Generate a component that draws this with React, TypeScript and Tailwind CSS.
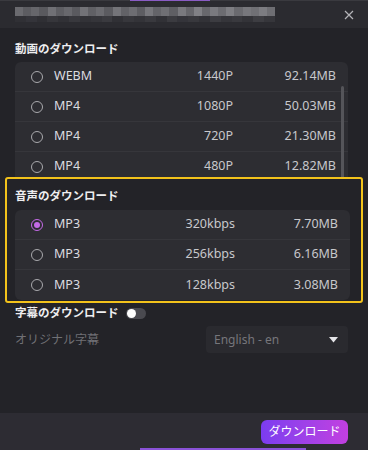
import React, { useState } from 'react';

const font = { fontFamily: '"Noto Sans", "Noto Sans CJK JP", sans-serif' };

const videoRows = [
    { fmt: 'WEBM', q: '1440P', size: '92.14MB' },
    { fmt: 'MP4', q: '1080P', size: '50.03MB' },
    { fmt: 'MP4', q: '720P', size: '21.30MB' },
    { fmt: 'MP4', q: '480P', size: '12.82MB' },
];

const audioRows = [
    { fmt: 'MP3', q: '320kbps', size: '7.70MB' },
    { fmt: 'MP3', q: '256kbps', size: '6.16MB' },
    { fmt: 'MP3', q: '128kbps', size: '3.08MB' },
];

// pixelated, blurred page title
const blurTop = ['#6a6a6f', '#5c5c61', '#66666b', '#59595e', '#707075', '#5e5e63', '#68686d', '#5a5a5f', '#727277', '#606065', '#6b6b70', '#5b5b60', '#747479', '#626267', '#6d6d72', '#5d5d62', '#77777c', '#646469', '#6f6f74', '#5f5f64', '#79797e', '#66666b', '#808085', '#68686d', '#7a7a7f', '#6c6c71', '#7e7e83', '#6a6a6f', '#77777c', '#707075', '#7c7c81', '#6e6e73'];
const blurBottom = ['#303035', '#34343a', '#2f2f34', '#36363b', '#313136', '#38383d', '#323237', '#35353a', '#3a3a3f', '#303035', '#37373c', '#333338', '#39393e', '#313136', '#3b3b40', '#34343a', '#38383d', '#323237', '#3c3c41', '#35353a', '#39393e', '#333338', '#3d3d42', '#36363b'];

const Radio = ({ checked }: { checked?: boolean }) => (
    <span
        className={
            'flex h-[12px] w-[12px] items-center justify-center rounded-full border ' +
            (checked ? 'border-[#c46ae6]' : 'border-[#a9a9ad]')
        }
    >
        {checked && <span className="h-[6px] w-[6px] rounded-full bg-[#c46ae6]" />}
    </span>
);

const Row = ({ fmt, q, size, checked, last }: { fmt: string; q: string; size: string; checked?: boolean; last?: boolean }) => (
    <div className={'flex h-[30px] items-center text-[12.5px] text-[#dcdce0] ' + (last ? '' : 'border-b border-[#36363b]')}>
        <div className="flex w-[39px] justify-end pr-[11px]">
            <Radio checked={checked} />
        </div>
        <span className="flex-1">{fmt}</span>
        <span className="w-[100px] text-right text-[#c8c8cc]">{q}</span>
        <span className="w-[115px] pr-[12px] text-right text-[#c8c8cc]">{size}</span>
    </div>
);

export default function App() {
    const [selected] = useState(0);
    return (
        <div className="relative flex h-[450px] w-[368px] flex-col overflow-hidden bg-[#232328]" style={font}>
            <div className="absolute left-[130px] top-0 h-[1px] w-[80px] bg-[#8a5cc4]" />

            {/* header */}
            <div className="flex h-[28px] items-center justify-between border-t border-[#3a3a3f] bg-[#2b2b30] pl-[15px] pr-[14px]">
                <div className="flex flex-col">
                    <div className="flex h-[9px] w-[260px]">
                        {blurTop.map((c, i) => (
                            <div key={i} className="h-full flex-1" style={{ background: c }} />
                        ))}
                    </div>
                    <div className="flex h-[6px] w-[260px]">
                        {blurBottom.map((c, i) => (
                            <div key={i} className="h-full flex-1" style={{ background: c }} />
                        ))}
                    </div>
                </div>
                <svg width="10" height="10" viewBox="0 0 10 10" className="text-[#b4b4b8]">
                    <path d="M1 1 L9 9 M9 1 L1 9" stroke="currentColor" strokeWidth="1.2" />
                </svg>
            </div>

            {/* body */}
            <div className="flex flex-1 flex-col">
                <div className="px-[15px] pt-[11px] text-[11.5px] font-bold leading-[20px] text-[#eeeef0]">動画のダウンロード</div>
                <div className="relative ml-[15px] mr-[20px] mt-[3px] h-[115px] overflow-hidden">
                    <div className="rounded-[6px] bg-[#2d2d32]">
                        {videoRows.map((r, i) => (
                            <Row key={i} {...r} />
                        ))}
                    </div>
                    <div className="absolute right-[4px] top-[24px] h-[96px] w-[3px] rounded-full bg-[#55555a]" />
                </div>

                <div className="mx-[5px] rounded-[3px] border-2 border-[#f2c21b] pb-[1px] pl-[8px] pr-[11px]">
                    <div className="pt-[7px] text-[11.5px] font-bold leading-[20px] text-[#eeeef0]">音声のダウンロード</div>
                    <div className="mt-[4px] rounded-[6px] bg-[#2d2d32]">
                        {audioRows.map((r, i) => (
                            <Row key={i} {...r} checked={i === selected} last={i === audioRows.length - 1} />
                        ))}
                    </div>
                </div>

                <div className="flex items-center gap-[7px] px-[15px] text-[11.5px] font-bold leading-[20px] text-[#eeeef0]">
                    <span>字幕のダウンロード</span>
                    <span className="flex h-[11px] w-[20px] items-center rounded-full bg-[#4a4a50] px-[1px]">
                        <span className="h-[9px] w-[9px] rounded-full bg-white" />
                    </span>
                </div>

                <div className="mt-[3px] flex items-center justify-between pl-[15px] pr-[20px]">
                    <span className="text-[12px] text-[#707075]">オリジナル字幕</span>
                    <div className="flex h-[27px] w-[142px] items-center justify-between rounded-[4px] bg-[#2a2a2f] pl-[8px] pr-[10px]">
                        <span className="text-[12px] text-[#76767b]">English - en</span>
                        <svg width="9" height="6" viewBox="0 0 9 6">
                            <path d="M0 0 H9 L4.5 5.5 Z" fill="#e4e4e8" />
                        </svg>
                    </div>
                </div>
            </div>

            {/* footer */}
            <div className="flex h-[37px] items-center justify-end bg-[#2d2c33] pr-[20px]">
                <button className="h-[24px] w-[87px] rounded-[6px] bg-gradient-to-r from-[#7b3cf0] to-[#c23fe0] text-[12px] text-white">
                    ダウンロード
                </button>
            </div>
            <div className="absolute bottom-0 left-[140px] h-[2px] w-[166px] bg-[#8a52d8]" />
        </div>
    );
}
